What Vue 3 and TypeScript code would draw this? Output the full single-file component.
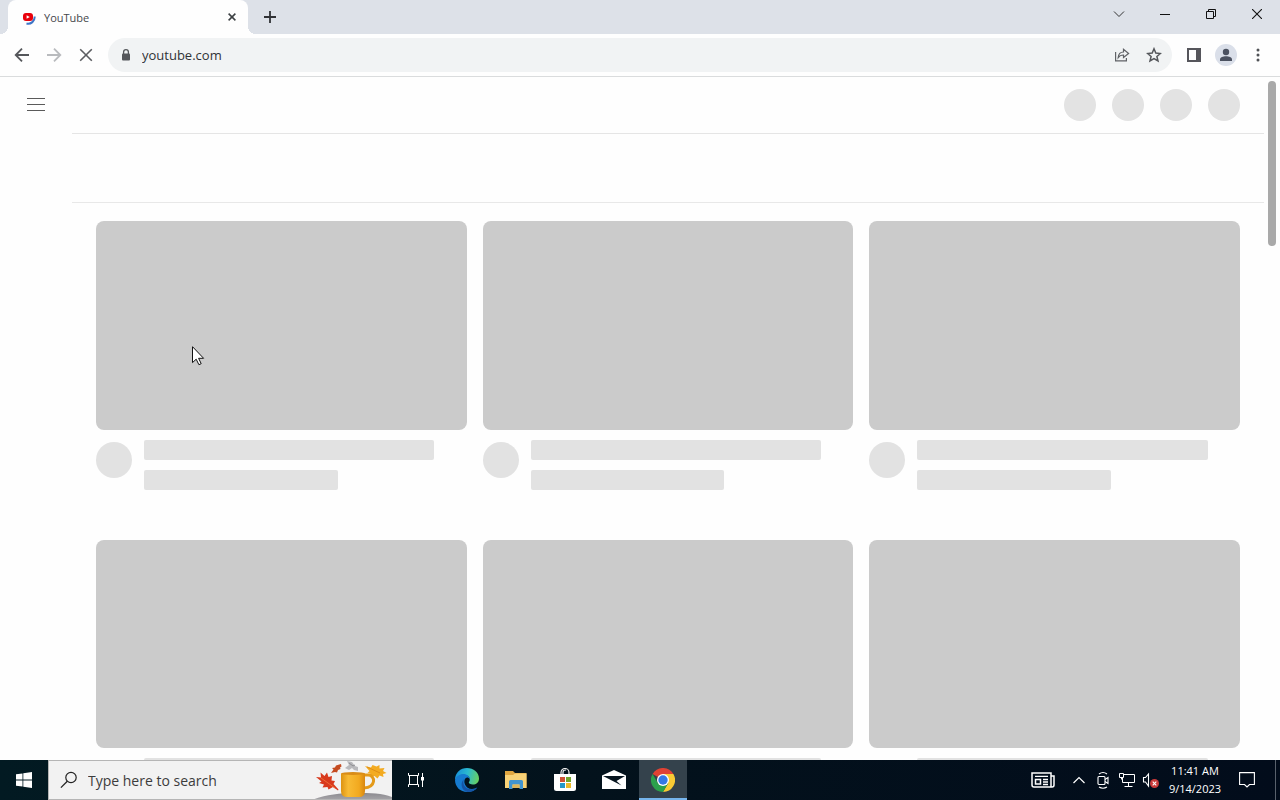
<script setup lang="ts">
import { ref } from 'vue'

const address = ref<string>('youtube.com')
const query = ref<string>('')
const cards: number[] = [1, 2, 3, 4, 5, 6]
const actions: number[] = [1, 2, 3, 4]
</script>

<template>
  <div class="desktop">
    <header class="tabs">
      <div class="tab">
        <svg class="favicon" width="16" height="16" viewBox="0 0 16 16">
          <path d="M13.600 7.500A6.500 6.500 0 0 1 5.500 14.500" fill="none" stroke="#3d74c6" stroke-width="2" />
          <rect x="2" y="4" width="10" height="8" rx="3" fill="#e9000b" />
          <path d="M5.600 6.200 8.800 8 5.600 9.800z" fill="#fff" />
        </svg>
        <span class="tab-title">YouTube</span>
        <button class="tab-close" aria-label="Close tab">
          <svg width="8" height="8" viewBox="0 0 8 8"><path d="M.6.600l6.800 6.800M7.400.600L.6 7.400" stroke="#3c4043" stroke-width="1.500" /></svg>
        </button>
      </div>
      <button class="new-tab" aria-label="New tab">
        <svg width="12" height="12" viewBox="0 0 12 12"><path d="M6 0v12M0 6h12" stroke="#303236" stroke-width="1.800" /></svg>
      </button>
      <div class="window-controls">
        <button aria-label="Search tabs"><svg width="12" height="12" viewBox="0 0 12 12"><path d="M1 3.500l5 5 5-5" fill="none" stroke="#333" stroke-width="1" /></svg></button>
        <button aria-label="Minimize"><svg width="10" height="10" viewBox="0 0 10 10"><path d="M0 5.500h10" stroke="#111" /></svg></button>
        <button aria-label="Restore"><svg width="10" height="10" viewBox="0 0 10 10"><path d="M.5 2.500h7v7h-7zM2.500 2.500V.5h7v7h-2" fill="none" stroke="#111" /></svg></button>
        <button aria-label="Close"><svg width="10" height="10" viewBox="0 0 10 10"><path d="M0 0l10 10M10 0L0 10" stroke="#111" stroke-width="1.100" /></svg></button>
      </div>
    </header>

    <nav class="toolbar">
      <button class="tool" aria-label="Back"><svg width="16" height="16" viewBox="0 0 16 16"><path d="M15 8H2M8 1.700 1.700 8 8 14.300" fill="none" stroke="#55575b" stroke-width="1.800" /></svg></button>
      <button class="tool" aria-label="Forward"><svg width="16" height="16" viewBox="0 0 16 16"><path d="M1 8h13M8 1.700 14.300 8 8 14.300" fill="none" stroke="#b9bbbe" stroke-width="1.800" /></svg></button>
      <button class="tool" aria-label="Stop"><svg width="14" height="14" viewBox="0 0 14 14"><path d="M1.200 1.200l11.600 11.600M12.800 1.200 1.200 12.800" stroke="#5b5d61" stroke-width="1.600" /></svg></button>
      <div class="omnibox">
        <svg class="lock" width="12" height="14" viewBox="0 0 12 14"><path d="M3.600 6V4a2.400 2.400 0 0 1 4.800 0v2" fill="none" stroke="#55575b" stroke-width="1.300" /><rect x="2" y="5.500" width="8" height="7" rx="1" fill="#55575b" /></svg>
        <input v-model="address" class="url" type="text" aria-label="Address" />
        <button class="tool" aria-label="Share">
          <svg width="16" height="16" viewBox="0 0 16 16"><path d="M1.600 5v8.800h10.800V11M4.200 10.600C4.500 6.800 6.500 5 9.500 5V2.300L14.600 6.500 9.500 10.500V8C7.200 8 5.500 8.700 4.200 10.600z" fill="none" stroke="#606266" stroke-width="1.200" /></svg>
        </button>
        <button class="tool" aria-label="Bookmark">
          <svg width="16" height="16" viewBox="0 0 16 16"><path d="M8 1.800l1.800 4.300 4.600.4-3.500 3 1.100 4.500L8 11.600 4 14l1.100-4.500-3.500-3 4.600-.4z" fill="none" stroke="#55575b" stroke-width="1.500" /></svg>
        </button>
      </div>
      <button class="tool" aria-label="Side panel"><svg width="14" height="14" viewBox="0 0 14 14"><path d="M0 0h14v14H0zM2 2v10h7V2z" fill="#55555b" fill-rule="evenodd" /></svg></button>
      <button class="tool" aria-label="Profile">
        <svg width="22" height="22" viewBox="0 0 22 22"><circle cx="11" cy="11" r="11" fill="#dadfe9" /><circle cx="11" cy="8" r="3.200" fill="#4b5160" /><path d="M5 17v-1.500c0-2.100 3-3.200 6-3.200s6 1.100 6 3.200V17z" fill="#4b5160" /></svg>
      </button>
      <button class="tool" aria-label="Menu"><svg width="4" height="14" viewBox="0 0 4 14"><g fill="#505256"><circle cx="2" cy="2" r="1.500" /><circle cx="2" cy="7" r="1.500" /><circle cx="2" cy="12" r="1.500" /></g></svg></button>
    </nav>

    <main class="page">
      <aside class="guide">
        <button class="guide-button" aria-label="Guide"><svg width="18" height="14" viewBox="0 0 18 14"><path d="M0 .5h18M0 6.500h18M0 12.500h18" stroke="#5a5a5a" /></svg></button>
      </aside>
      <div class="feed">
        <div class="masthead"><span v-for="a in actions" :key="a" class="dot"></span></div>
        <div class="chips"></div>
        <div class="grid">
          <article v-for="c in cards" :key="c" class="card">
            <div class="thumb"></div>
            <div class="details">
              <span class="avatar"></span>
              <div class="lines"><span class="line title"></span><span class="line meta"></span></div>
            </div>
          </article>
        </div>
      </div>
      <div class="scrollbar"><div class="scroll-thumb"></div></div>
    </main>

    <footer class="taskbar">
      <button class="start" aria-label="Start"><svg width="16" height="16" viewBox="0 0 16 16"><path d="M0 2.300 6.500 1.400V7.600H0zM7.300 1.200 16 0V7.600H7.300zM0 8.400h6.500v6.200L0 13.700zM7.300 8.400H16V16l-8.700-1.200z" fill="#fff" /></svg></button>
      <div class="search">
        <svg class="glass" width="18" height="18" viewBox="0 0 18 18"><circle cx="11" cy="6.500" r="5.200" fill="none" stroke="#222" stroke-width="1.200" /><path d="M7.300 10.200.9 16.600" stroke="#222" stroke-width="1.300" /></svg>
        <input v-model="query" class="search-input" type="text" placeholder="Type here to search" aria-label="Search" />
        <svg class="art" width="80" height="38" viewBox="0 1 80 38">
          <defs>
            <linearGradient id="mug" x1="0" x2="1" y1="0" y2="0"><stop offset="0" stop-color="#dd9312" /><stop offset=".3" stop-color="#f8bb35" /><stop offset=".75" stop-color="#f2a91f" /><stop offset="1" stop-color="#d88712" /></linearGradient>
            <linearGradient id="hill" x1="0" x2="0" y1="0" y2="1"><stop offset="0" stop-color="#8c8b90" /><stop offset="1" stop-color="#aaa9ad" /></linearGradient>
          </defs>
          <path d="M0 40C12 35 27 33 43 33s27 0 37 4v4H0z" fill="url(#hill)" />
          <path d="M33 8l4-3-2-4 5 1 3 4 3 1 0 4-4-1-2-2-3 2z" fill="#b9b9bc" />
          <path d="M37 3l4 3 2-1" fill="none" stroke="#8d8d91" />
          <path d="M4 17l5 .5-.5-5 4 3.500 2.500-3.500 1.500 4.500 3.500-1-.5 4.500 3.500.500-1.500 3 5 5.500-.5 1-5-3.500-4.500 2.500-1-2.500-5 .5 1.500-3-5-1.500 2.500-1.500z" fill="#d8391c" />
          <path d="M9 18l14 10" stroke="#f06a32" stroke-width="1" />
          <path d="M29 4l-5 1.500-1 2-3 .5 1.500 1.500-2.500 3.500 4-1 2 .5 1-2.500 2.500-1-.5-1.500 1.500-1z" fill="#c44b20" />
          <path d="M53 6l6 1.500 1.500-2.500 4 1.500 3-1.500 0 3.500 5-.5-1.500 3 3.500 2-3.500 1 .5 3-4-1.500-2 3-3-2.500-4 1 .5-3-3.500-1 2-2z" fill="#f3ab21" />
          <path d="M55 7l13 6" stroke="#d98513" stroke-width=".8" />
          <path d="M52 15h4a5.500 5.500 0 0 1 5.500 6.500c-.6 3.500-3.500 6-9.500 6.500" fill="none" stroke="#e49a1a" stroke-width="3" />
          <path d="M29 13.500h24V31q0 6-6 6H35q-6 0-6-6z" fill="url(#mug)" />
          <ellipse cx="41" cy="13.500" rx="12" ry="1.500" fill="#d98c17" />
        </svg>
      </div>
      <button class="task" aria-label="Task view">
        <svg width="18" height="18" viewBox="0 0 18 18"><path d="M1.500 2v2.500h10V2M1.500 16v-2.500h10V16M2.500 4.500v9M10.500 4.500v9M15.500 2v14" fill="none" stroke="#fff" stroke-width="1" /><path d="M14 6h3v3.500h-3z" fill="#fff" /></svg>
      </button>
      <div class="apps">
        <button class="task" aria-label="Edge">
          <svg width="26" height="26" viewBox="0 0 26 26">
            <defs><linearGradient id="edgeTop" x1="0" x2="1" y1=".3" y2=".5"><stop offset="0" stop-color="#168ed8" /><stop offset=".5" stop-color="#2bbad0" /><stop offset="1" stop-color="#66cf63" /></linearGradient></defs>
            <path d="M1 13C1 5.500 6.500 1 13 1s12 4.500 12 10.500c0 4-3 6-6 6-2.800 0-4.200-1-4.200-1.900 0-.8 1-1.400 1-3.200C15.800 9.500 13 8 10 8c-5 0-8 3-9 5z" fill="url(#edgeTop)" />
            <path d="M1 13c1-3.500 4.500-6 8.500-6 3.500 0 6.300 2.500 6.300 5.400-1-2-2.800-2.400-4-1.400C8.500 13.800 11 22 18 22c2.200 0 4-.8 5.300-1.500C21 23.500 17.500 25 13 25 6.500 25 1 20 1 13z" fill="#167bd0" />
            <path d="M9.800 12C8 17 11 22.500 17.500 22.300c2.500 0 4.500-1 5.800-1.800C21 23.500 17.500 25 13.500 25 8 24 5.500 17 9.800 12z" fill="#1554a5" />
          </svg>
        </button>
        <button class="task" aria-label="File Explorer">
          <svg width="22" height="20" viewBox="0 0 22 20"><path d="M0 1h8l2 2h11.500v15H0z" fill="#e0a640" /><path d="M0 5h8l2-1.500h11.500V18H0z" fill="#f8d277" /><path d="M4 11.500q0-1.500 1.500-1.500h11q1.500 0 1.500 1.500V19h-3.500v-4.500h-7V19H4z" fill="#4194d0" /><path d="M7.500 14.500h7V18h-7z" fill="#dfb75e" /></svg>
        </button>
        <button class="task" aria-label="Store">
          <svg width="24" height="24" viewBox="0 0 24 24"><path d="M8 7V4.500a4 4 0 0 1 8 0V7M10 7V4q0-2 3-2" fill="none" stroke="#eee" stroke-width="1.200" /><path d="M1 6h22v14.500q0 2.500-2.500 2.500h-17Q1 23 1 20.500z" fill="#fff" /><path d="M7 9h5v5H7z" fill="#ce5134" /><path d="M13 9h5v5h-5z" fill="#72a62c" /><path d="M7 15h5v5H7z" fill="#2497c9" /><path d="M13 15h5v5h-5z" fill="#edb927" /></svg>
        </button>
        <button class="task" aria-label="Mail">
          <svg width="24" height="20" viewBox="0 0 24 20"><path d="M0 5.500 12 0l12 5.500V19H0z" fill="#fff" /><path d="M1 6h22l-8.500 5 5 4.500L1 6z" fill="#07151f" /></svg>
        </button>
        <button class="task active" aria-label="Chrome">
          <svg width="24" height="24" viewBox="0 0 24 24"><path d="M12 12 1.600 6A12 12 0 0 1 22.400 6z" fill="#df4234" /><path d="M12 12V6h10.400A12 12 0 0 1 12 24l5.200-9z" fill="#f8ca34" /><path d="M6.800 15 1.600 6A12 12 0 0 0 12 24l5.200-9L12 12z" fill="#2ba14b" /><circle cx="12" cy="12" r="6" fill="#fff" /><circle cx="12" cy="12" r="4.700" fill="#3478e5" /></svg>
        </button>
      </div>
      <div class="tray">
        <button class="news" aria-label="News"><svg width="24" height="16" viewBox="0 0 24 16"><path d="M1 1h19v14H3q-2 0-2-2zM20 4h3v9q0 2-2 2h-2" fill="none" stroke="#fff" stroke-width="1.500" /><path d="M4.500 7.500h5v4.500h-5z" fill="none" stroke="#fff" stroke-width="1.500" /><path d="M4 4.300h13M12 7.500h5M12 10h5M12 12.500h5" stroke="#fff" stroke-width="1.300" /></svg></button>
        <button class="tray-icon" aria-label="Hidden icons"><svg width="14" height="10" viewBox="0 0 14 10"><path d="M1.500 8 7 2.500 12.500 8" fill="none" stroke="#fff" stroke-width="1.200" /></svg></button>
        <button class="tray-icon" aria-label="Meet now"><svg width="12" height="18" viewBox="0 0 12 18"><rect x="1" y="5.500" width="7" height="8" rx="1" fill="none" stroke="#fff" stroke-width="1.100" /><path d="M8 8.500 11 6.500v6L8 10.500M2 3q4-3 8 0M2 16q4 2.500 8 0" fill="none" stroke="#fff" stroke-width="1.100" /></svg></button>
        <button class="tray-icon" aria-label="Network"><svg width="18" height="16" viewBox="0 0 18 16"><path d="M6 2.500h10.500v8h-12V6M1.500 1.500h4v4h-4zM3.500 5.500v2M10.500 10.500v4M6.500 14.500h8" fill="none" stroke="#fff" /></svg></button>
        <button class="tray-icon" aria-label="Volume"><svg width="18" height="16" viewBox="0 0 18 16"><path d="M1.500 5.500H3.500l3-3.500v12L3.500 10H1.500z" fill="none" stroke="#fff" stroke-width="1.100" /><circle cx="12.500" cy="11.500" r="4.500" fill="#c93a3a" /><path d="M10.700 9.700l3.600 3.600M14.300 9.700l-3.600 3.600" stroke="#fff" stroke-width="1.100" /></svg></button>
        <button class="clock"><span>11:41 AM</span><span>9/14/2023</span></button>
        <button class="notify" aria-label="Notifications"><svg width="16" height="16" viewBox="0 0 16 16"><path d="M.6.600h14.800v11.900H10.500L8 15l-2.500-2.500H.6z" fill="none" stroke="#fff" stroke-width="1.100" /></svg></button>
        <button class="peek" aria-label="Show desktop"></button>
      </div>
    </footer>

    <svg class="cursor" width="13" height="20" viewBox="0 0 13 20"><path d="M.5.700v15.900l3.700-3.400 2.700 5.500 2.300-1-2.600-5.400h5z" fill="#fff" stroke="#111" stroke-linejoin="round" /></svg>
  </div>
</template>

<style>
body { margin: 0; }
</style>

<style scoped>
.desktop {
  position: relative;
  display: flex;
  flex-direction: column;
  height: 100vh;
  overflow: hidden;
  background: #fefefe;
  font-family: "Open Sans", "Noto Sans", sans-serif;
}
* { box-sizing: border-box; }
svg { display: block; flex: none; }
button {
  display: flex;
  align-items: center;
  justify-content: center;
  flex: none;
  padding: 0;
  border: 0;
  background: none;
  font: inherit;
  color: inherit;
}
input {
  flex: 1;
  min-width: 0;
  padding: 0;
  border: 0;
  outline: 0;
  background: none;
  font: inherit;
}

.tabs { display: flex; flex: none; height: 34px; padding-left: 8px; background: #dde1e8; }
.tab {
  position: relative;
  display: flex;
  align-items: center;
  width: 240px;
  padding: 0 8px 0 13px;
  border-radius: 8px 8px 0 0;
  background: #fefefe;
}
.tab::before, .tab::after {
  content: "";
  position: absolute;
  bottom: 0;
  width: 8px;
  height: 8px;
}
.tab::before { left: -8px; background: radial-gradient(circle at 0 0, transparent 8px, #fefefe 8px); }
.tab::after { right: -8px; background: radial-gradient(circle at 100% 0, transparent 8px, #fefefe 8px); }
.tab-title { flex: 1; margin-left: 7px; font-size: 11px; color: #45474b; }
.tab-close { width: 16px; height: 16px; }
.new-tab { width: 28px; margin-left: 8px; }
.window-controls { display: flex; margin-left: auto; }
.window-controls button { width: 46px; height: 28px; }

.toolbar {
  display: flex;
  align-items: center;
  flex: none;
  height: 43px;
  padding: 0 6px;
  border-bottom: 1px solid #dadcdd;
}
.tool { width: 32px; height: 32px; }
.omnibox {
  display: flex;
  align-items: center;
  flex: 1;
  height: 34px;
  margin: 0 6px;
  padding: 0 2px 0 12px;
  border-radius: 17px;
  background: #f1f3f4;
}
.url { margin-left: 10px; font-size: 13px; color: #303236; }

.page { display: flex; flex: 1; min-height: 0; overflow: hidden; }
.guide { flex: none; width: 72px; }
.guide-button { width: 72px; height: 56px; }
.feed { flex: 1; min-width: 0; }
.masthead {
  display: flex;
  align-items: center;
  justify-content: flex-end;
  gap: 16px;
  height: 57px;
  padding-right: 24px;
  border-bottom: 1px solid #e5e5e5;
}
.dot { width: 32px; height: 32px; border-radius: 50%; background: #e3e3e3; }
.chips { height: 69px; border-bottom: 1px solid #e8e8e8; }
.grid {
  display: grid;
  grid-template-columns: repeat(3, 1fr);
  gap: 50px 16px;
  padding: 18px 24px;
}
.thumb { aspect-ratio: 1.777; border-radius: 8px; background: #cbcbcb; }
.details { display: flex; gap: 12px; margin-top: 10px; }
.avatar { flex: none; width: 36px; height: 36px; margin-top: 2px; border-radius: 50%; background: #e2e2e2; }
.lines { display: flex; flex: 1; flex-direction: column; gap: 10px; }
.line { height: 20px; border-radius: 2px; background: #e2e2e2; }
.title { width: 90%; }
.meta { width: 60%; }
.scrollbar { display: flex; flex: none; width: 16px; padding: 4px; }
.scroll-thumb { width: 8px; height: 165px; border-radius: 4px; background: #a9a9a9; }

.taskbar {
  display: flex;
  flex: none;
  height: 40px;
  background: linear-gradient(90deg, #021a22, #03121c 45%, #020c1b);
  color: #fff;
}
.start { width: 48px; }
.search {
  display: flex;
  align-items: center;
  width: 344px;
  padding-left: 11px;
  border: 1px solid #b5b5b5;
  border-right: 0;
  background: #f2f2f2;
}
.search-input { margin-left: 10px; font-size: 14px; color: #333; }
.search-input::placeholder { color: #3c3c3c; opacity: 1; }
.task { width: 48px; height: 40px; }
.apps { display: flex; gap: 1px; margin-left: 3px; }
.active { background: #34424c; box-shadow: inset 0 -2px #76b5ec; }
.tray { display: flex; margin-left: auto; }
.news { width: 36px; margin-right: 6px; }
.tray-icon { width: 24px; }
.clock { flex-direction: column; width: 64px; font-size: 11px; line-height: 18px; }
.notify { width: 40px; }
.peek { width: 5px; margin-left: 8px; border-left: 1px solid #59616c; }

.cursor { position: absolute; top: 346px; left: 192px; }
</style>
